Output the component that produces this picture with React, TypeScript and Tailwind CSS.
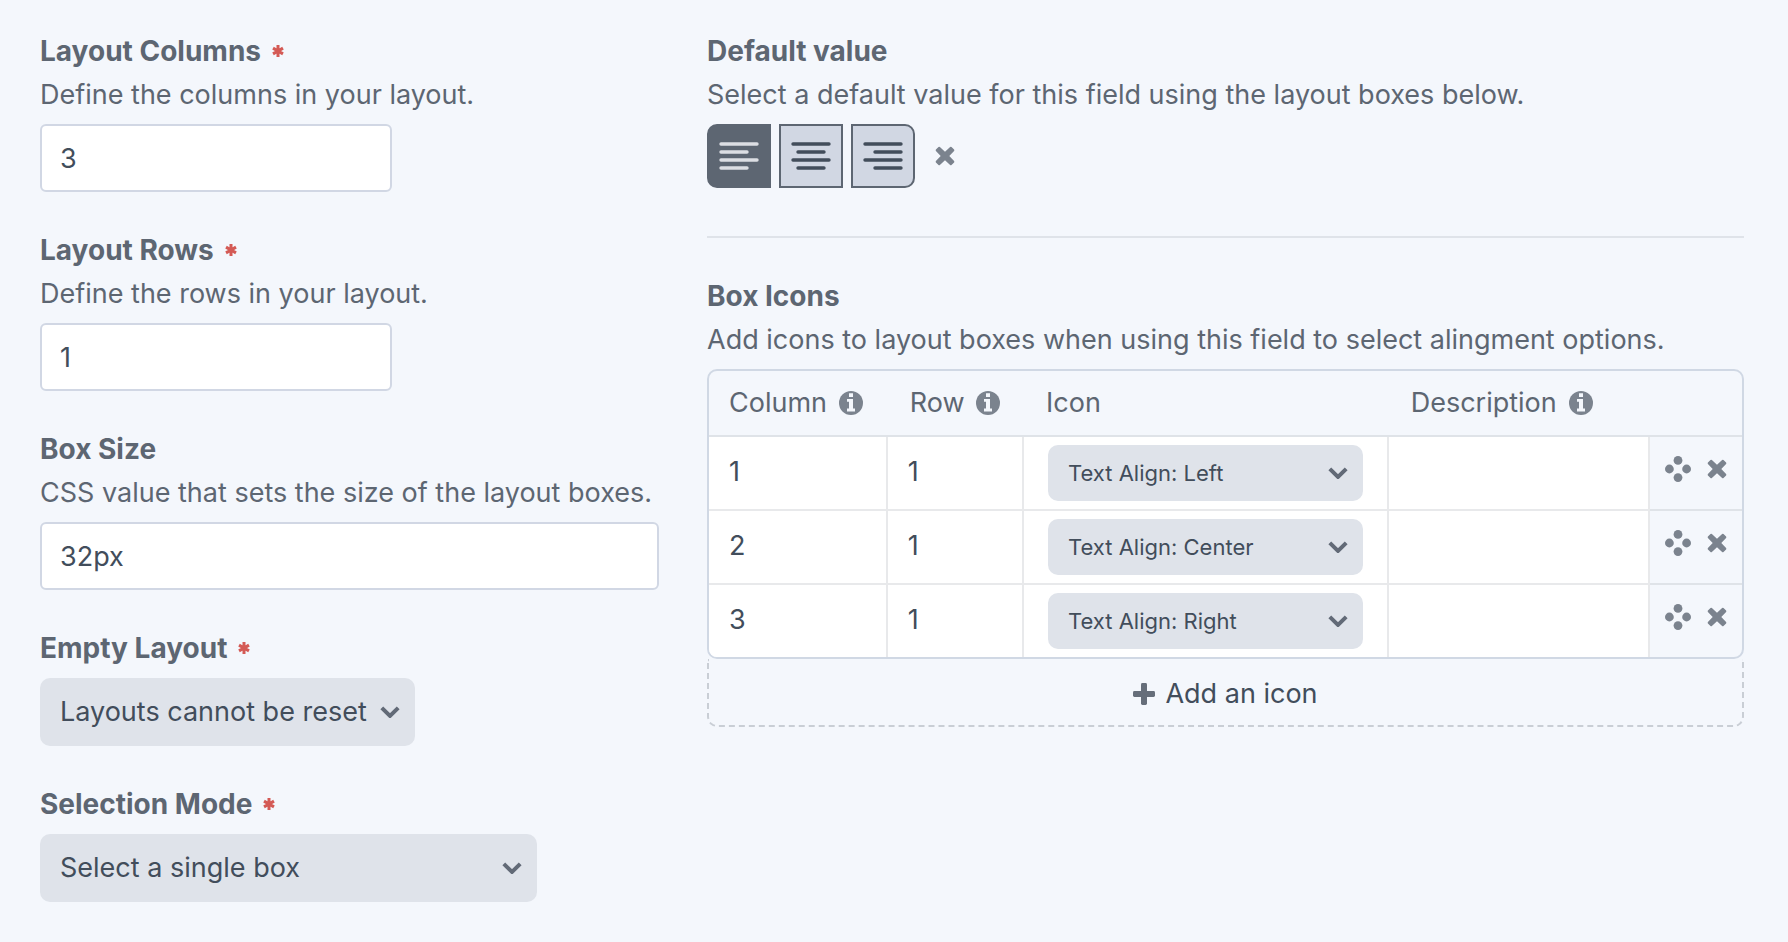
import { useId, type ReactNode } from "react";

function Asterisk() {
  return (
    <svg className="size-3 shrink-0" viewBox="0 0 12 12" aria-hidden="true">
      <path d="M6 0v12M1 3.1l10 5.8M1 8.9l10-5.8" stroke="#d45a55" strokeWidth="3" fill="none" />
    </svg>
  );
}

function Chevron() {
  return (
    <svg className="pointer-events-none absolute right-[15px] top-1/2 h-3 w-5 -translate-y-1/2" viewBox="0 0 20 12" aria-hidden="true">
      <path d="M1.8 1.9l8.2 8 8.2-8" stroke="#626a77" strokeWidth="4" fill="none" />
    </svg>
  );
}

function Cross() {
  return (
    <svg className="size-5" viewBox="0 0 20 20" aria-hidden="true">
      <path
        d="M4.9 0.9L10 5.7l5.1-4.8q.7-.5 1.4 0l2.6 2.6q.5.7 0 1.4L14.3 10l4.8 5.1q.5.7 0 1.4l-2.6 2.6q-.7.5-1.4 0L10 14.3l-5.1 4.8q-.7.5-1.4 0L.9 16.5q-.5-.7 0-1.4L5.7 10 .9 4.9q-.5-.7 0-1.4L3.5.9q.7-.5 1.4 0z"
        fill="#7b838e"
      />
    </svg>
  );
}

function MoveDots() {
  return (
    <svg className="size-[26px]" viewBox="0 0 26 26" fill="#7b838e" aria-hidden="true">
      <circle cx="13" cy="4.4" r="4.4" />
      <circle cx="4.4" cy="13" r="4.4" />
      <circle cx="21.6" cy="13" r="4.4" />
      <circle cx="13" cy="21.6" r="4.4" />
    </svg>
  );
}

function Info() {
  return (
    <svg className="size-6 shrink-0" viewBox="0 0 24 24" aria-hidden="true">
      <circle cx="12" cy="12" r="12" fill="#7b838e" />
      <path d="M10 2.2h4v3.9h-4zM8 8h6v9.6h2v2.8H8v-2.8h2v-6.8H8z" fill="#f4f7fc" />
    </svg>
  );
}

function Plus() {
  return (
    <svg className="size-[22px]" viewBox="0 0 22 22" fill="#666e7a" aria-hidden="true">
      <rect x="0" y="8" width="22" height="6" rx="1.4" />
      <rect x="8" y="0" width="6" height="22" rx="1.4" />
    </svg>
  );
}

type Align = "left" | "center" | "right";

const alignPaths: Record<Align, string> = {
  left: "M14 20H50M14 28H40M14 36H50M14 44H40",
  center: "M14 20H50M19 28H45M14 36H50M19 44H45",
  right: "M14 20H50M24 28H50M14 36H50M24 44H50",
};

function AlignBox({ align, selected, className }: { align: Align; selected?: boolean; className: string }) {
  return (
    <button
      type="button"
      aria-label={`Text align ${align}`}
      aria-pressed={!!selected}
      className={`size-16 border-2 border-[#5d6672] ${selected ? "bg-[#5d6672] text-[#dcdee3]" : "bg-[#d1d7e3] text-[#424d5b]"} ${className}`}
    >
      <svg className="-m-0.5 size-16" viewBox="0 0 64 64" aria-hidden="true">
        <path d={alignPaths[align]} stroke="currentColor" strokeWidth="3.4" strokeLinecap="round" fill="none" />
      </svg>
    </button>
  );
}

function Field({
  label,
  required,
  hint,
  children,
}: {
  label: string;
  required?: boolean;
  hint?: string;
  children: (id: string) => ReactNode;
}) {
  const id = useId();
  return (
    <div>
      <label htmlFor={id} className="flex items-center gap-[11px] text-[28px] font-bold leading-[44px]">
        {label}
        {required && <Asterisk />}
      </label>
      {hint && <p className="leading-[43px]">{hint}</p>}
      <div className="mt-2">{children(id)}</div>
    </div>
  );
}

function TextInput({ id, value, className }: { id: string; value: string; className: string }) {
  return (
    <input
      id={id}
      type="text"
      defaultValue={value}
      className={`block h-[68px] rounded-md border-2 border-[#d1d7e4] bg-white px-[18px] text-[#424d5b] outline-none ${className}`}
    />
  );
}

const selectBase = "block w-full appearance-none bg-[#dfe3ea] pl-5 text-[#424d5b] outline-none rounded-[10px]";

const rows: { column: string; icon: string }[] = [
  { column: "1", icon: "Text Align: Left" },
  { column: "2", icon: "Text Align: Center" },
  { column: "3", icon: "Text Align: Right" },
];

function Head({ children, info }: { children: ReactNode; info?: boolean }) {
  return (
    <th scope="col" className="h-[66px] border-b-2 border-[#dfe3e8] pl-[22px] text-left font-normal first:pl-5">
      <span className="flex items-center gap-3">
        {children}
        {info && <Info />}
      </span>
    </th>
  );
}

const cell = "border-r-2 border-[#e8e9eb] bg-white p-0 group-[:not(:last-child)]:border-b-2";
const cellInput = "block h-[72px] w-full bg-transparent px-5 pb-1 text-[#424d5b] outline-none";

export default function App() {
  return (
    <main className="min-h-screen bg-[#f4f7fc] pb-9 pl-10 pr-11 pt-[29px] font-['Inter',sans-serif] text-[27px] text-[#5d6672]">
      <div className="grid grid-cols-[619fr_1037fr] gap-12">
        <div className="flex min-w-0 flex-col gap-9">
          <Field label="Layout Columns" required hint="Define the columns in your layout.">
            {(id) => <TextInput id={id} value="3" className="w-[352px]" />}
          </Field>
          <Field label="Layout Rows" required hint="Define the rows in your layout.">
            {(id) => <TextInput id={id} value="1" className="w-[352px]" />}
          </Field>
          <Field label="Box Size" hint="CSS value that sets the size of the layout boxes.">
            {(id) => <TextInput id={id} value="32px" className="w-full" />}
          </Field>
          <Field label="Empty Layout" required>
            {(id) => (
              <div className="relative w-[375px]">
                <select id={id} className={`h-[68px] ${selectBase}`}>
                  <option>Layouts cannot be reset</option>
                </select>
                <Chevron />
              </div>
            )}
          </Field>
          <Field label="Selection Mode" required>
            {(id) => (
              <div className="relative w-[497px]">
                <select id={id} className={`h-[68px] ${selectBase}`}>
                  <option>Select a single box</option>
                </select>
                <Chevron />
              </div>
            )}
          </Field>
        </div>

        <div className="min-w-0">
          <section>
            <h2 className="text-[28px] font-bold leading-[44px]">Default value</h2>
            <p className="leading-[43px]">Select a default value for this field using the layout boxes below.</p>
            <div className="mt-2 flex items-center gap-2">
              <AlignBox align="left" selected className="rounded-l-[10px]" />
              <AlignBox align="center" className="" />
              <AlignBox align="right" className="rounded-r-[10px]" />
              <button type="button" aria-label="Clear" className="ml-3">
                <Cross />
              </button>
            </div>
          </section>

          <hr className="mb-9 mt-12 border-t-2 border-[#dfe3e9]" />

          <section>
            <h2 className="text-[28px] font-bold leading-[44px]">Box Icons</h2>
            <p className="leading-[43px]">Add icons to layout boxes when using this field to select alingment options.</p>
            <div className="mt-2 overflow-hidden rounded-[10px] border-2 border-[#d0d8e4]">
              <table className="w-full table-fixed border-separate border-spacing-0">
                <colgroup>
                  <col className="w-[17.3%]" />
                  <col className="w-[13.2%]" />
                  <col className="w-[35.3%]" />
                  <col />
                  <col className="w-[92px]" />
                </colgroup>
                <thead>
                  <tr>
                    <Head info>Column</Head>
                    <Head info>Row</Head>
                    <Head>Icon</Head>
                    <Head info>Description</Head>
                    <td className="border-b-2 border-[#dfe3e8]" />
                  </tr>
                </thead>
                <tbody>
                  {rows.map((row) => (
                    <tr key={row.column} className="group">
                      <td className={cell}>
                        <input aria-label="Column" defaultValue={row.column} className={cellInput} />
                      </td>
                      <td className={cell}>
                        <input aria-label="Row" defaultValue="1" className={cellInput} />
                      </td>
                      <td className={cell}>
                        <div className="relative mx-6 my-2">
                          <select aria-label="Icon" className={`h-14 text-[22px] ${selectBase}`}>
                            <option>{row.icon}</option>
                          </select>
                          <Chevron />
                        </div>
                      </td>
                      <td className={cell}>
                        <input aria-label="Description" className={cellInput} />
                      </td>
                      <td className="border-[#dfe3e8] p-0 group-[:not(:last-child)]:border-b-2">
                        <div className="flex items-center justify-center gap-4 pb-2">
                          <button type="button" aria-label="Reorder">
                            <MoveDots />
                          </button>
                          <button type="button" aria-label="Delete">
                            <Cross />
                          </button>
                        </div>
                      </td>
                    </tr>
                  ))}
                </tbody>
              </table>
            </div>
            <button
              type="button"
              className="flex h-[68px] w-full items-center justify-center gap-[10px] rounded-b-[10px] border-2 border-t-0 border-dashed border-[#c9ced5] pt-1 text-[#424d5b]"
            >
              <Plus />
              Add an icon
            </button>
          </section>
        </div>
      </div>
    </main>
  );
}
